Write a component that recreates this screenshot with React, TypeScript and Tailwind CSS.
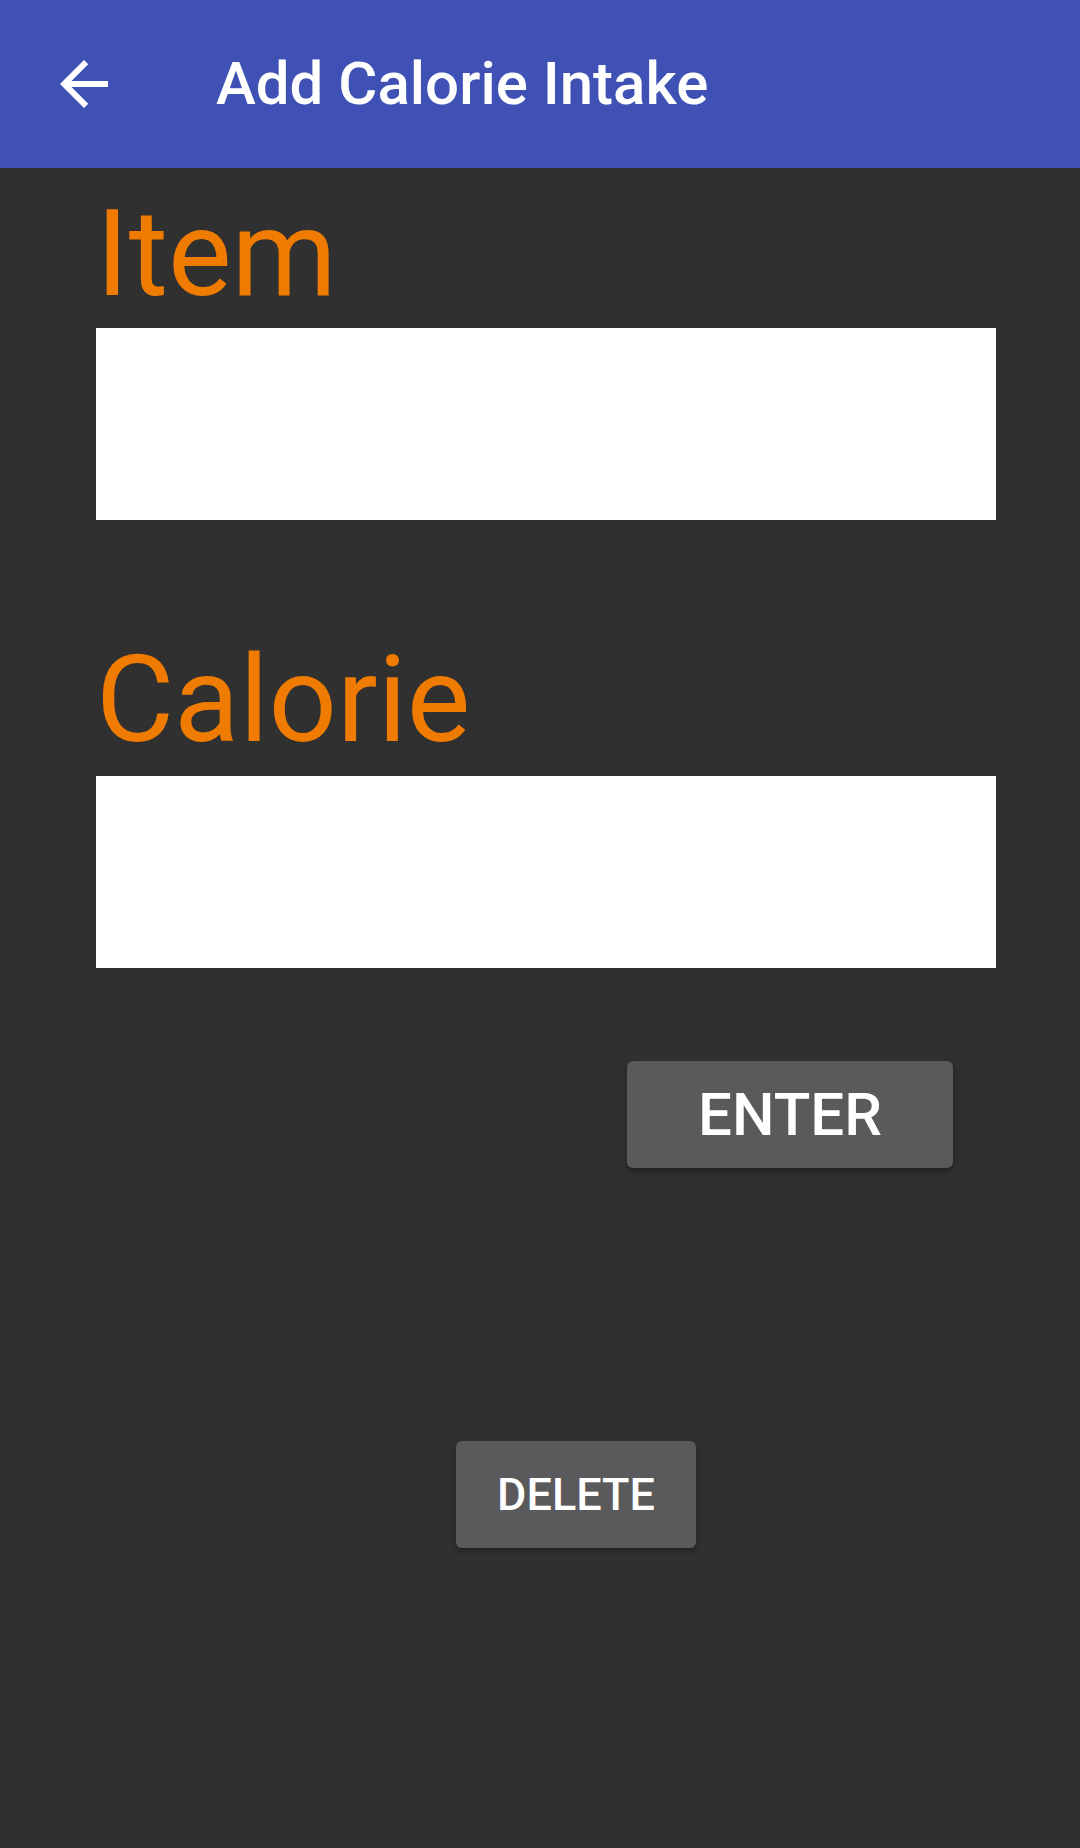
// Add Calorie Intake screen: toolbar, two labelled fields, two action buttons.

function BackArrow() {
  return (
    <svg viewBox="0 0 24 24" className="w-[72px] h-[72px]" fill="#ffffff">
      <path d="M20 11H7.83l5.59-5.59L12 4l-8 8 8 8 1.41-1.41L7.83 13H20v-2z" />
    </svg>
  )
}

function FieldLabel({ children, className = '' }: { children: React.ReactNode; className?: string }) {
  return (
    <div className={`text-[120px] leading-[141px] h-[141px] text-[#ef7b00] font-normal ${className}`}>
      {children}
    </div>
  )
}

function Field({ className = '' }: { className?: string }) {
  return (
    <input
      type="text"
      className={`block w-[900px] h-[192px] bg-white outline-none border-0 ${className}`}
    />
  )
}

export default function App() {
  return (
    <div className="min-h-[1848px] w-[1080px] bg-[#303030] font-['Roboto',sans-serif]">
      <header className="h-[168px] bg-[#3f51b5] flex items-center">
        <div className="ml-[48px] w-[72px] h-[72px] flex items-center justify-center">
          <BackArrow />
        </div>
        <h1 className="ml-[96px] text-[60px] leading-[70px] font-medium text-white">Add Calorie Intake</h1>
      </header>

      <main className="px-[96px] pt-[16px] flex flex-col items-start">
        <FieldLabel>Item</FieldLabel>
        <Field className="mt-[3px]" />

        <FieldLabel className="mt-[110px]">Calorie</FieldLabel>
        <Field className="mt-[5px]" />

        <button className="mt-[93px] ml-[531px] w-[326px] h-[107px] rounded-[6px] bg-[#5a595c] text-white text-[60px] leading-none font-medium shadow-[0_3px_5px_rgba(0,0,0,0.35)]">
          ENTER
        </button>

        <button className="mt-[273px] ml-[360px] w-[240px] h-[107px] rounded-[6px] bg-[#5a595c] text-white text-[45px] leading-none font-medium shadow-[0_3px_5px_rgba(0,0,0,0.35)]">
          DELETE
        </button>
      </main>
    </div>
  )
}
